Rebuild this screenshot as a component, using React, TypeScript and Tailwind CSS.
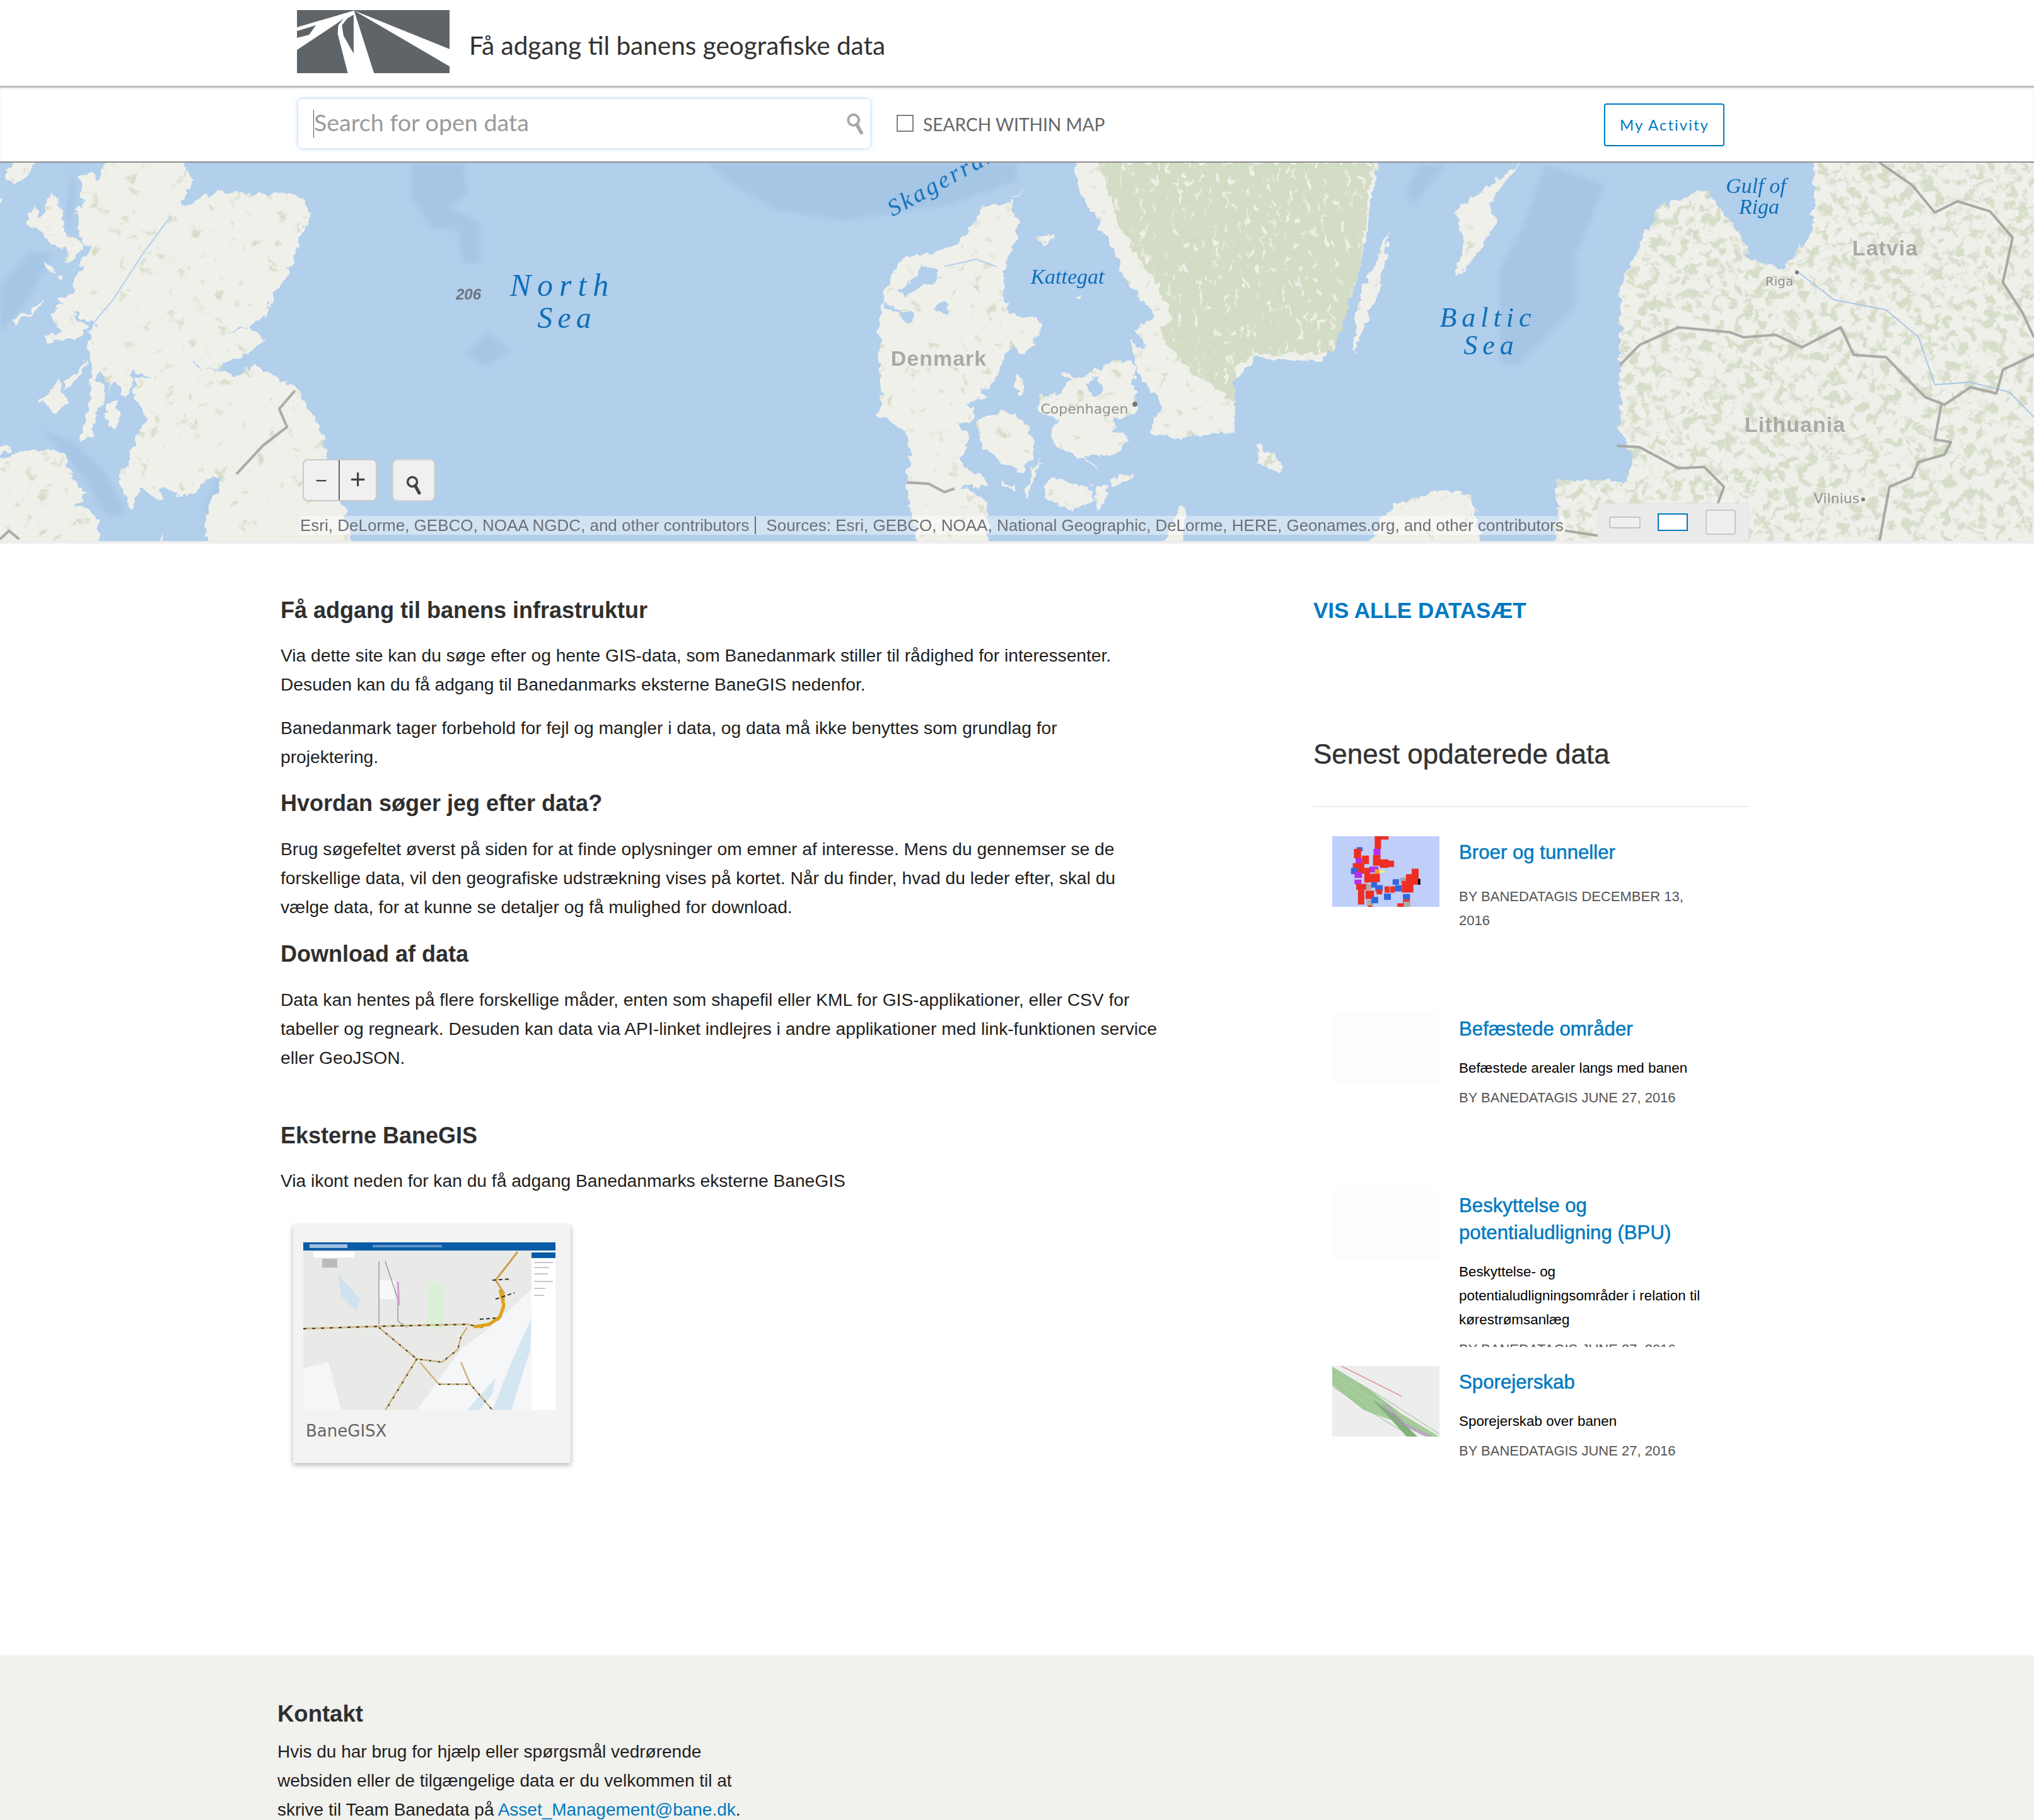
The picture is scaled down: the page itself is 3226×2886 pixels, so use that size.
import React from 'react';

// traced map shapes, each group in the coordinates of its own crop
const WEST = 'scale(0.3571,0.3827)';
const MID = 'translate(1380,0) scale(0.3571,0.3827)';
const EAST = 'translate(1613,-8) scale(1.0287,0.3956)';

const westLand = [
  'M500 -60 L820 -60 L820 30 L870 60 L830 120 L800 190 L760 215 L810 180 L960 120 L1100 130 L1300 125 L1360 160 L1380 230 L1340 290 L1310 380 L1270 480 L1210 550 L1195 620 L1110 675 L1050 690 L1000 715 L1110 675 L1170 740 L1100 790 L1040 810 L970 855 L900 850 L850 815 L880 850 L970 860 L1050 885 L1130 840 L1210 880 L1310 930 L1380 1030 L1430 1120 L1450 1220 L1520 1420 L1600 1700 L960 1700 L905 1490 L960 1360 L990 1300 L920 1310 L860 1370 L790 1380 L720 1340 L720 1410 L620 1350 L590 1430 L520 1320 L550 1280 L590 1180 L650 1060 L620 1010 L590 960 L600 890 L670 890 L590 860 L580 940 L555 975 L510 900 L480 930 L500 960 L450 860 L395 930 L410 850 L390 760 L400 700 L430 670 L380 650 L320 620 L250 570 L340 540 L330 490 L380 430 L350 420 L400 360 L340 280 L340 190 L370 180 L355 60 L400 40 L430 80 Z',
  'M225 125 L270 180 L285 280 L310 310 L380 340 L340 390 L300 420 L290 350 L220 340 L190 290 L110 250 L140 210 L150 170 L180 230 Z',
  'M195 410 L240 420 L240 460 L215 450 Z',
  'M250 465 L275 465 L270 490 Z',
  'M55 650 L130 620 L185 570 L180 600 L120 640 L70 675 Z',
  'M220 620 L280 590 L340 640 L390 680 L370 720 L290 730 L210 745 L200 720 L280 700 L240 660 Z',
  'M385 810 L340 860 L290 910 L290 950 L340 900 L385 830 Z',
  'M175 1000 L260 900 L300 1000 L230 1040 L220 1000 Z',
  'M400 880 L470 940 L460 990 L420 1060 L410 1130 L360 1160 L380 1050 L410 950 Z',
  'M470 1000 L510 990 L540 1070 L500 1100 L470 1060 Z',
  'M-60 1230 L60 1210 L130 1190 L240 1190 L300 1220 L320 1310 L380 1370 L330 1420 L400 1430 L440 1490 L430 1700 L-60 1700 Z',
  'M30 30 L90 -60 L190 -60 L130 50 L60 90 L35 70 Z',
  'M-60 120 L20 160 L-60 220 Z',
  'M-60 1150 L60 1190 L-60 1230 Z',
  'M680 1700 L720 1530 L730 1700 Z',
];

const midLand = [
  'M680 105 L640 140 L630 180 L655 240 L650 320 L620 380 L590 460 L600 560 L620 630 L680 640 L740 640 L760 680 L730 740 L700 780 L660 790 L640 760 L600 790 L580 850 L550 900 L530 930 L490 940 L520 970 L420 1000 L470 1020 L460 1060 L400 1080 L430 1120 L440 1180 L390 1230 L440 1270 L520 1310 L530 1340 L400 1340 L490 1380 L530 1440 L510 1700 L240 1700 L170 1400 L160 1310 L180 1200 L160 1110 L90 1070 L30 1050 L50 1000 L40 800 L45 640 L50 590 L90 480 L150 390 L280 370 L400 340 L450 260 L500 180 L620 170 Z',
  'M745 315 L820 295 L800 330 L760 345 Z',
  'M905 555 L945 550 L920 570 Z',
  'M650 880 L680 910 L670 960 L650 960 Z',
  'M470 1070 L600 1030 L680 1060 L700 1110 L725 1160 L720 1230 L680 1280 L580 1240 L500 1180 Z',
  'M760 1225 L720 1320 L700 1400 L690 1370 L720 1270 Z',
  'M580 1310 L650 1350 L640 1360 L590 1340 Z',
  'M750 975 L850 950 L900 900 L850 870 L950 890 L1100 810 L1180 840 L1170 960 L1190 1000 L1170 1050 L1090 1070 L1080 1110 L1145 1140 L1120 1190 L1050 1220 L960 1220 L1040 1300 L960 1230 L830 1180 L800 1130 L830 1060 L760 1040 Z',
  'M1060 1320 L1170 1280 L1160 1310 L1080 1340 Z',
  'M1000 1340 L1060 1340 L1050 1400 L1010 1450 Z',
  'M770 1340 L820 1300 L900 1330 L970 1340 L1000 1400 L890 1445 L780 1390 Z',
  'M1230 1700 L1380 1420 L1400 1440 L1380 1700 Z',
  'M910 -60 L1620 -60 L1620 1110 L1400 1140 L1290 1130 L1240 1125 L1265 1060 L1295 1000 L1260 950 L1200 900 L1160 770 L1145 740 L1230 770 L1180 690 L1265 640 L1250 600 L1200 570 L1120 460 L1080 360 L1020 270 L1000 200 L960 180 L920 100 Z',
];

const midInlets = [
  'M60 570 L130 620 L190 620 L190 660 L160 660 L130 630 L60 610 Z',
  'M230 430 L310 440 L290 500 L230 510 L150 560 L130 530 L190 480 Z',
  'M280 600 L340 570 L350 630 L290 620 Z',
  'M950 920 L1010 890 L1040 950 L990 970 Z',
];

const eastLand = [
  'M300 -60 L560 -60 L545 200 L530 430 L510 600 L490 700 L470 820 L370 800 L330 900 L335 1100 L300 1110 Z',
  'M575 290 L560 520 L520 780 L520 620 L545 460 Z',
  'M775 25 L700 160 L675 220 L690 340 L675 480 L695 440 L740 260 L730 180 Z',
  'M375 1150 L410 1230 L400 1270 L370 1210 Z',
  'M500 1700 L580 1390 L660 1330 L700 1350 L730 1700 Z',
  'M1230 -60 L1225 300 L1180 450 L1130 400 L1110 290 L1060 130 L990 200 L950 400 L930 520 L930 1100 L950 1200 L940 1300 L830 1290 L835 1400 L820 1700 L1620 1700 L1620 -60 Z',
];

const borders = {
  west: ['M1310 945 L1240 1020 L1275 1095 L1170 1170 L1050 1290', 'M0 1560 L40 1525 L85 1560'],
  mid: ['M165 1325 L260 1330 L330 1365 L375 1350'],
  east: [
    'M1330 20 L1380 110 L1415 220 L1450 175 L1500 215 L1535 320 L1520 500 L1550 620 L1568 720',
    'M930 830 L960 750 L1020 680 L1100 700 L1120 720 L1170 710 L1210 760 L1270 680 L1290 790 L1340 800 L1400 960 L1430 990 L1470 920 L1510 945 L1520 850 L1568 790',
    'M1425 990 L1415 1130 L1440 1140 L1430 1190 L1390 1220 L1380 1280 L1345 1320 L1330 1535',
    'M925 1155 L960 1160 L1020 1245 L1060 1240 L1090 1320 L1080 1390',
    'M845 1495 L895 1515',
  ],
};

const squares: [number, number, number, number, string][] = [
  [262, 198, 22, 60, '#ee2e24'], [270, 198, 40, 16, '#ee2e24'], [200, 250, 20, 20, '#3366dd'], [190, 258, 25, 45, '#ee2e24'],
  [258, 258, 24, 30, '#b52ee8'], [256, 288, 26, 50, '#ee2e24'], [196, 302, 22, 26, '#b52ee8'], [218, 290, 24, 40, '#ee2e24'],
  [186, 326, 40, 50, '#ee2e24'], [180, 348, 24, 30, '#3366dd'], [280, 308, 30, 40, '#ee2e24'], [305, 314, 24, 30, '#ee2e24'],
  [244, 342, 30, 28, '#b52ee8'], [192, 366, 26, 30, '#b52ee8'], [226, 348, 20, 70, '#ee2e24'], [262, 354, 16, 26, '#f0a030'],
  [278, 360, 18, 12, '#f5ee80'], [240, 376, 40, 40, '#ee2e24'], [192, 404, 24, 22, '#b52ee8'], [198, 424, 40, 28, '#ee2e24'],
  [232, 426, 20, 26, '#aaaaaa'], [250, 416, 20, 26, '#3366dd'], [264, 430, 26, 30, '#3366dd'], [268, 450, 20, 24, '#ee2e24'],
  [204, 452, 22, 70, '#ee2e24'], [230, 456, 30, 40, '#ee2e24'], [296, 436, 18, 30, '#ee2e24'], [294, 470, 24, 30, '#3366dd'],
  [316, 436, 16, 30, '#ee2e24'], [332, 430, 24, 30, '#3366dd'], [324, 402, 22, 26, '#3366dd'], [350, 394, 20, 30, '#aaaaaa'],
  [370, 378, 44, 50, '#ee2e24'], [390, 352, 24, 40, '#ee2e24'], [356, 410, 40, 55, '#ee2e24'], [412, 400, 8, 28, '#000000'],
  [360, 472, 24, 26, '#3366dd'], [360, 498, 24, 35, '#ee2e24'], [362, 508, 22, 25, '#aaaaaa'], [340, 516, 22, 17, '#ee2e24'],
  [234, 500, 24, 26, '#aaaaaa'], [250, 486, 24, 30, '#3366dd'], [238, 526, 16, 7, '#ee2e24'],
];

const updates = [
  { title: 'Broer og tunneller', desc: '', meta: 'BY BANEDATAGIS DECEMBER 13, 2016', thumb: 'broer' },
  { title: 'Befæstede områder', desc: 'Befæstede arealer langs med banen', meta: 'BY BANEDATAGIS JUNE 27, 2016', thumb: 'blank' },
  {
    title: 'Beskyttelse og potentialudligning (BPU)',
    desc: 'Beskyttelse- og potentialudligningsområder i relation til kørestrømsanlæg',
    meta: 'BY BANEDATAGIS JUNE 27, 2016',
    thumb: 'blank',
  },
  { title: 'Sporejerskab', desc: 'Sporejerskab over banen', meta: 'BY BANEDATAGIS JUNE 27, 2016', thumb: 'spor' },
];

function Logo() {
  return (
    <svg className="block w-[242px] h-[100px]" viewBox="0 0 727 300" preserveAspectRatio="none">
      <rect width="727" height="300" fill="#5f6469" />
      <path d="M272 2 L727 185 L727 268 Z" fill="#fff" />
      <path d="M272 2 L0 82 L0 100 L90 72 L58 118 L0 132 L0 190 L195 60 Z" fill="#fff" />
      <path d="M272 2 L367 300 L242 300 L194 112 L197 72 L232 27 Z" fill="#fff" />
      <path d="M270 207 L222 122 L214 72 L240 40 L270 22 Z" fill="#5f6469" />
    </svg>
  );
}

function Magnifier({ className, color }: { className: string; color: string }) {
  return (
    <svg className={className} viewBox="0 0 24 30" fill="none" stroke={color}>
      <circle cx="10" cy="10" r="7.5" strokeWidth="3.5" />
      <path d="M14.5 16 L21 28" strokeWidth="5" strokeLinecap="round" />
    </svg>
  );
}

function BaseMap() {
  return (
    <svg className="absolute inset-0 w-full h-full" viewBox="0 0 3226 600" preserveAspectRatio="none">
      <defs>
        <filter id="soft" filterUnits="userSpaceOnUse" x="-40" y="-40" width="3306" height="680">
          <feGaussianBlur stdDeviation="3" />
        </filter>
        <filter id="rough" filterUnits="userSpaceOnUse" x="-40" y="-40" width="3306" height="680">
          <feTurbulence type="fractalNoise" baseFrequency="0.07" numOctaves="3" seed="11" result="n" />
          <feDisplacementMap in="SourceGraphic" in2="n" scale="16" xChannelSelector="R" yChannelSelector="G" result="d" />
          <feGaussianBlur in="d" stdDeviation="0.6" />
        </filter>
        <filter id="patches" colorInterpolationFilters="sRGB" filterUnits="userSpaceOnUse" x="0" y="0" width="3226" height="600">
          <feTurbulence type="fractalNoise" baseFrequency="0.05" numOctaves="3" seed="7" />
          <feColorMatrix type="matrix" values="0 0 0 0 0.84  0 0 0 0 0.87  0 0 0 0 0.79  8 0 0 0 -5.2" />
        </filter>
        <filter id="patchesDense" colorInterpolationFilters="sRGB" filterUnits="userSpaceOnUse" x="0" y="0" width="3226" height="600">
          <feTurbulence type="fractalNoise" baseFrequency="0.06" numOctaves="3" seed="21" />
          <feColorMatrix type="matrix" values="0 0 0 0 0.84  0 0 0 0 0.87  0 0 0 0 0.79  8 0 0 0 -4.1" />
        </filter>
        <filter id="flecks" colorInterpolationFilters="sRGB" filterUnits="userSpaceOnUse" x="0" y="0" width="3226" height="600">
          <feTurbulence type="fractalNoise" baseFrequency="0.12 0.05" numOctaves="3" seed="3" />
          <feColorMatrix type="matrix" values="0 0 0 0 0.94  0 0 0 0 0.94  0 0 0 0 0.91  10 0 0 0 -6.3" />
        </filter>
        <clipPath id="land">
          {westLand.map(d => <path key={d} d={d} transform={WEST} />)}
          {midLand.map(d => <path key={d} d={d} transform={MID} />)}
          {eastLand.map(d => <path key={d} d={d} transform={EAST} />)}
        </clipPath>
        <clipPath id="baltics">
          <path transform={EAST} d="M1230 -60 L1225 300 L1180 450 L1130 400 L1110 290 L1060 130 L990 200 L950 400 L930 520 L930 1100 L950 1200 L940 1300 L830 1290 L835 1400 L820 1700 L1620 1700 L1620 -60 Z" />
        </clipPath>
        <clipPath id="sweden">
          <path transform={MID} d="M990 -60 L1620 -60 L1620 1000 L1480 900 L1350 800 L1290 690 L1340 640 L1260 480 L1180 380 L1100 250 Z" />
          <path transform={EAST} d="M300 -60 L550 -60 L530 430 L490 780 L370 790 L300 870 Z" />
        </clipPath>
      </defs>

      <rect width="3226" height="600" fill="#b2cfec" />

      {/* darker sea floor */}
      <g filter="url(#soft)">
        <g fill="#a6c6e5">
          <path transform={WEST} d="M190 1110 L330 1160 L470 1290 L560 1450 L480 1470 L370 1300 L250 1170 Z" />
          <path transform={WEST} d="M0 520 L130 370 L230 380 L130 560 L0 700 Z" />
          <path transform={WEST} d="M320 30 L330 120 L310 280 L295 200 Z" />
          <path transform={WEST} d="M960 1310 L980 1330 L920 1450 L900 1470 Z" />
        </g>
        <g fill="#a6c6e5" transform="translate(0,-8) scale(1.0287,0.3956)">
          <path d="M635 20 L715 20 L720 150 L690 200 L740 260 L740 420 L715 420 L705 290 L665 280 L650 220 L635 170 Z" />
          <path d="M750 700 L785 770 L750 835 L720 790 Z" />
          <path d="M1090 20 L1568 20 L1568 90 L1460 190 L1300 250 L1200 210 L1130 110 Z" />
        </g>
        <g fill="#a6c6e5" transform={EAST}>
          <path d="M815 30 L905 110 L860 400 L860 600 L770 835 L745 820 L745 450 L780 280 Z" />
          <path d="M620 30 L660 30 L610 190 L600 140 Z" />
        </g>
      </g>

      <g filter="url(#rough)">
        <g fill="#f0f0eb">
          {westLand.map(d => <path key={d} d={d} transform={WEST} />)}
          {midLand.map(d => <path key={d} d={d} transform={MID} />)}
          {eastLand.map(d => <path key={d} d={d} transform={EAST} />)}
        </g>
        <g clipPath="url(#land)">
          <rect width="3226" height="600" filter="url(#patches)" />
        </g>
        <g clipPath="url(#baltics)">
          <rect width="3226" height="600" filter="url(#patchesDense)" />
        </g>
        <g clipPath="url(#sweden)">
          <rect width="3226" height="600" fill="#d3dcc4" />
          <rect width="3226" height="600" filter="url(#flecks)" />
        </g>
        <g fill="#b2cfec">
          {midInlets.map(d => <path key={d} d={d} transform={MID} />)}
        </g>
      </g>

      {/* great glen and river */}
      <path transform={WEST} d="M760 220 L640 370 L500 570 L400 680" fill="none" stroke="#b2cfec" strokeWidth="2" vectorEffect="non-scaling-stroke" />
      <path transform={MID} d="M330 430 L470 400 L560 430" fill="none" stroke="#b2cfec" strokeWidth="2" vectorEffect="non-scaling-stroke" />
      <path
        transform={EAST}
        d="M1200 450 L1260 570 L1340 610 L1390 720 L1415 910 L1470 900 L1530 940 L1568 1040"
        fill="none"
        stroke="#a8c8e6"
        strokeWidth="2"
        vectorEffect="non-scaling-stroke"
      />

      <g fill="none" stroke="#a8a8a4" strokeWidth="4" strokeLinejoin="round">
        {borders.west.map(d => <path key={d} d={d} transform={WEST} vectorEffect="non-scaling-stroke" />)}
        {borders.mid.map(d => <path key={d} d={d} transform={MID} vectorEffect="non-scaling-stroke" />)}
        {borders.east.map(d => <path key={d} d={d} transform={EAST} vectorEffect="non-scaling-stroke" />)}
      </g>
      <circle cx="1800" cy="383" r="4" fill="#777" />
      <circle cx="2850" cy="174" r="3" fill="#777" />
      <circle cx="2955" cy="534" r="3" fill="#777" />

      <g className="font-['Liberation_Serif',serif] italic" fill="#0f6fb8" textAnchor="middle">
        <text x="892" y="211" fontSize="50" letterSpacing="10">North</text>
        <text x="899" y="262" fontSize="48" letterSpacing="8">Sea</text>
        <text x="0" y="0" fontSize="38" letterSpacing="4" textAnchor="start" transform="translate(1416 86) rotate(-29)">Skagerrak</text>
        <text x="1693" y="192" fontSize="34">Kattegat</text>
        <text x="2360" y="260" fontSize="44" letterSpacing="8">Baltic</text>
        <text x="2365" y="304" fontSize="44" letterSpacing="8">Sea</text>
        <text x="2785" y="48" fontSize="34">Gulf of</text>
        <text x="2790" y="81" fontSize="34">Riga</text>
      </g>
      <g className="font-['Liberation_Sans',sans-serif]" fill="#a9a9a6" textAnchor="middle">
        <text x="743" y="217" fontSize="24" fontWeight="700" fontStyle="italic" fill="#6c7480">206</text>
        <text x="1489" y="322" fontSize="34" fontWeight="700" letterSpacing="1">Denmark</text>
        <text x="2990" y="147" fontSize="34" fontWeight="700" letterSpacing="1">Latvia</text>
        <text x="2847" y="427" fontSize="34" fontWeight="700" letterSpacing="1">Lithuania</text>
      </g>
      <g className="font-['DejaVu_Sans',sans-serif]" fill="#8f8f8c" textAnchor="middle">
        <text x="1720" y="398" fontSize="22">Copenhagen</text>
        <text x="2822" y="195" fontSize="20">Riga</text>
        <text x="2913" y="540" fontSize="22">Vilnius</text>
      </g>
    </svg>
  );
}

function BroerThumb() {
  return (
    <svg className="block w-full h-full" viewBox="115 198 371 335" preserveAspectRatio="none">
      <rect x="115" y="198" width="371" height="335" fill="#bfcffa" />
      {squares.map(([x, y, w, h, c], i) => <rect key={i} x={x} y={y} width={w} height={h} fill={c} />)}
    </svg>
  );
}

function SporThumb() {
  return (
    <svg className="block w-full h-full" viewBox="0 0 170 112">
      <rect width="170" height="112" fill="#ededed" />
      <path d="M0 2 L60 38 L110 76 L170 112 L150 112 L105 90 L50 70 L0 30 Z" fill="#a6cb9b" />
      <path d="M62 52 L100 78 L135 112 L118 112 L85 76 Z" fill="#7fb276" />
      <path d="M0 8 L70 50 M0 16 L60 56 M0 24 L50 62 M30 20 L100 70" fill="none" stroke="#8dba82" strokeWidth="1" strokeDasharray="3 1" />
      <path d="M0 32 L60 72 L125 112 M0 2 L80 50 L170 108" fill="none" stroke="#8dba82" strokeWidth="1" />
      <path d="M80 60 L105 90 L150 112 M86 62 L115 92 L158 112" fill="none" stroke="#c77fe0" strokeWidth="1.2" />
      <path d="M14 0 L110 48" fill="none" stroke="#ea6f74" strokeWidth="1.2" />
    </svg>
  );
}

function BaneGisThumb() {
  return (
    <svg className="block w-full h-full blur-[0.6px]" viewBox="0 0 400 266">
      <rect width="400" height="266" fill="#e9eae8" />
      <path d="M180 266 L250 170 L290 140 L400 40 L400 266 Z" fill="#f5f6f8" />
      <path d="M0 200 L40 190 L60 266 L0 266 Z" fill="#f5f6f8" />
      <path d="M55 50 L90 90 L85 110 L60 85 Z" fill="#cfe2ee" />
      <path d="M200 60 L225 70 L220 140 L195 130 Z" fill="#dcf0d8" />
      <path d="M120 60 L145 60 L145 90 L120 90 Z" fill="#f8f8f8" />
      <path d="M260 266 L305 215 L300 240 L280 266 M330 266 L360 170 L362 120 L330 190 L300 266 Z" fill="#d4e6f2" />
      <path d="M0 137 L125 133 L260 130 L285 135" fill="none" stroke="#d8bf83" strokeWidth="3" />
      <path d="M0 137 L125 133 L260 130 L285 135" fill="none" stroke="#333" strokeWidth="2" strokeDasharray="5 9" />
      <path d="M120 135 L180 185 L220 190 L245 170 L250 150 L260 135 M180 185 L130 266 M185 190 L215 225 L265 225 L300 266 M250 190 L265 225" fill="none" stroke="#cdb27a" strokeWidth="2.5" />
      <path d="M120 135 L180 185 L220 190 L245 170 L250 150 M180 185 L135 260 M215 225 L265 225 L300 266" fill="none" stroke="#333" strokeWidth="2" strokeDasharray="3 11" />
      <path d="M130 30 L150 90 L150 125 L165 135 M120 30 L120 130" fill="none" stroke="#9e9896" strokeWidth="1.5" />
      <path d="M150 62 L152 100" fill="none" stroke="#d59fd2" strokeWidth="3" />
      <path d="M280 135 L310 122 L318 105 L318 80 L305 60 L340 15" fill="none" stroke="#c9a24a" strokeWidth="3" />
      <path d="M270 134 L295 130 L312 118 L318 100 L312 75" fill="none" stroke="#e2a016" strokeWidth="5" />
      <path d="M280 122 L305 120 M300 60 L330 58 M305 90 L335 80" fill="none" stroke="#333" strokeWidth="2" strokeDasharray="6 4" />
      <rect width="400" height="13" fill="#0b5ca6" />
      <rect x="10" y="3" width="60" height="6" fill="#9dbfe0" />
      <rect x="110" y="4" width="110" height="4" fill="#5c93c8" />
      <rect x="362" y="13" width="38" height="253" fill="#fff" />
      <rect x="362" y="16" width="38" height="9" fill="#0b5ca6" />
      <path d="M366 32 H396 M366 40 H390 M366 50 H388 M366 62 H396 M366 73 H384 M366 84 H382" stroke="#c8c8c8" strokeWidth="2" />
      <rect x="16" y="15" width="65" height="9" fill="#fff" />
      <rect x="30" y="26" width="24" height="14" fill="#b9bcbd" />
    </svg>
  );
}

export default function App() {
  return (
    <div className="h-[2886px] overflow-hidden bg-white font-['Liberation_Sans',sans-serif] text-[#1e1e1e]">
      {/* Header */}
      <header className="h-[136px] flex items-start pl-[471px] pt-4">
        <Logo />
        <h1 className="ml-[31px] mt-[32px] font-['Lato',sans-serif] text-[40.5px] leading-[48px] text-[#323232]">
          Få adgang til banens geografiske data
        </h1>
      </header>

      {/* Search bar */}
      <div className="h-[120px] border-t-[3px] border-[#bdbdbd] shadow-[inset_0_2px_3px_rgba(0,0,0,0.08)] flex items-start pl-[473px]">
        <div className="mt-[18px] w-[907px] h-[78px] rounded-md bg-white shadow-[0_0_7px_rgba(90,160,230,0.55)] flex items-center pl-6 pr-[10px]">
          <span className="w-px h-[44px] bg-[#555]" />
          <span className="flex-1 -mt-[3px] font-['Lato',sans-serif] text-[37.6px] text-[#9a9a9a]">Search for open data</span>
          <Magnifier className="w-[28px] h-[34px]" color="#a8a8a8" />
        </div>
        <span className="ml-[42px] mt-[43px] w-[27px] h-[27px] border-2 border-[#808080]" />
        <span className="ml-[15px] mt-[41px] font-['Lato',sans-serif] text-[28.1px] leading-[34px] text-[#666]">SEARCH WITHIN MAP</span>
        <button className="ml-[792px] mt-[25px] w-[191px] h-[68px] rounded border-2 border-[#0079c1] bg-white font-['Lato',sans-serif] text-[24px] tracking-[2px] text-[#0079c1]">
          My Activity
        </button>
      </div>

      {/* Map */}
      <div className="relative h-[600px] overflow-hidden border-t-[2px] border-[#8c8c8c] box-content">
        <BaseMap />
        <div className="absolute left-[480px] top-[470px] flex">
          <div className="flex w-[118px] h-[67px] rounded-lg border-2 border-[#c9c9c9] bg-[#f0f0f0] text-[#444] overflow-hidden">
            <span className="w-[57px] flex items-center justify-center text-[32px] border-r-2 border-[#666]">−</span>
            <span className="flex-1 flex items-center justify-center text-[44px] leading-none pb-1">+</span>
          </div>
          <div className="ml-[24px] w-[68px] h-[67px] rounded-lg border-2 border-[#d4d4d4] bg-[#f0f0f0] flex items-center justify-center pt-[14px]">
            <Magnifier className="w-[24px] h-[30px]" color="#444" />
          </div>
        </div>
        <div className="absolute left-[476px] top-[560px] h-[30px] w-[2005px] bg-white/40 flex items-center whitespace-nowrap text-[26px] leading-[30px] text-[#6c7075]">
          <span>Esri, DeLorme, GEBCO, NOAA NGDC, and other contributors</span>
          <span className="ml-[9px] mr-[16px] w-[2px] h-[28px] bg-[#6c7075]" />
          <span>Sources: Esri, GEBCO, NOAA, National Geographic, DeLorme, HERE, Geonames.org, and other contributors</span>
        </div>
        <div className="absolute left-[2534px] top-[540px] w-[240px] h-[60px] bg-[#ebebeb] border border-[#e2e2e2] flex items-center pl-[17px]">
          <span className="w-[50px] h-[19px] rounded bg-[#efefef] border-2 border-[#c4c4c4]" />
          <span className="ml-[27px] w-[48px] h-[28px] bg-white border-2 border-[#0079c1]" />
          <span className="ml-[28px] w-[48px] h-[40px] rounded bg-[#efefef] border-2 border-[#c8c8c8]" />
        </div>
      </div>
      <div className="h-1 bg-[#eeeeee]" />

      {/* Content */}
      <main className="h-[1763px] flex pl-[445px]">
        <section className="w-[1638px] pt-[84px]">
          <div className="w-[1392px] text-[28.2px] leading-[46px]">
            <h2 className="text-[36px] leading-[44px] font-bold text-[#2f2f2f]">Få adgang til banens infrastruktur</h2>
            <p className="mt-[26px]">
              Via dette site kan du søge efter og hente GIS-data, som Banedanmark stiller til rådighed for interessenter. Desuden kan du få adgang til Banedanmarks eksterne BaneGIS nedenfor.
            </p>
            <p className="mt-[23px]">
              Banedanmark tager forbehold for fejl og mangler i data, og data må ikke benyttes som grundlag for projektering.
            </p>
            <h2 className="mt-[29px] text-[36px] leading-[44px] font-bold text-[#2f2f2f]">Hvordan søger jeg efter data?</h2>
            <p className="mt-[27px]">
              Brug søgefeltet øverst på siden for at finde oplysninger om emner af interesse. Mens du gennemser se de forskellige data, vil den geografiske udstrækning vises på kortet. Når du finder, hvad du leder efter, skal du vælge data, for at kunne se detaljer og få mulighed for download.
            </p>
            <h2 className="mt-[30px] text-[36px] leading-[44px] font-bold text-[#2f2f2f]">Download af data</h2>
            <p className="mt-[27px]">
              Data kan hentes på flere forskellige måder, enten som shapefil eller KML for GIS-applikationer, eller CSV for tabeller og regneark. Desuden kan data via API-linket indlejres i andre applikationer med link-funktionen service eller GeoJSON.
            </p>
            <h2 className="mt-[79px] text-[36px] leading-[44px] font-bold text-[#2f2f2f]">Eksterne BaneGIS</h2>
            <p className="mt-[26px]">Via ikont neden for kan du få adgang Banedanmarks eksterne BaneGIS</p>
          </div>
          <div className="ml-[20px] mt-[47px] w-[440px] h-[378px] bg-[#f3f3f3] shadow-[0_3px_8px_rgba(0,0,0,0.3)] px-4 pt-7">
            <div className="w-[400px] h-[266px]">
              <BaneGisThumb />
            </div>
            <p className="mt-[16px] ml-1 font-['DejaVu_Sans',sans-serif] text-[26px] leading-[34px] text-[#666]">BaneGISX</p>
          </div>
        </section>

        <aside className="w-[692px] pt-[84px]">
          <a className="block text-[35px] leading-[44px] font-bold text-[#0079c1]">VIS ALLE DATASÆT</a>
          <h2 className="mt-[180px] text-[44px] leading-[52px] text-[#323232] [-webkit-text-stroke:0.4px_#323232]">Senest opdaterede data</h2>
          <div className="mt-[56px] border-t-2 border-[#eeeeee] pt-[46px] pl-[30px]">
            {updates.map(item => (
              <article key={item.title} className="flex h-[250px] overflow-hidden mb-[30px]">
                <div className="w-[170px] h-[112px] shrink-0 bg-[#fdfdfd]">
                  {item.thumb === 'broer' && <BroerThumb />}
                  {item.thumb === 'spor' && <SporThumb />}
                </div>
                <div className="ml-[31px] w-[400px] pt-1">
                  <h3 className="text-[31.2px] leading-[43px] text-[#0079c1] [-webkit-text-stroke:0.5px_#0079c1]">{item.title}</h3>
                  <p className={`min-h-px text-[22.4px] leading-[38px] text-black ${item.desc ? 'mt-[22px]' : 'mt-5'}`}>{item.desc}</p>
                  <p className="mt-[9px] text-[22px] leading-[38px] text-[#555]">{item.meta}</p>
                </div>
              </article>
            ))}
          </div>
        </aside>
      </main>

      {/* Footer */}
      <footer className="h-[261px] bg-[#f1f1ee] pl-[440px] pt-[71px]">
        <h2 className="text-[36.5px] leading-[44px] font-bold text-[#2f2f2f]">Kontakt</h2>
        <p className="mt-[15px] w-[760px] text-[28px] leading-[46px]">
          Hvis du har brug for hjælp eller spørgsmål vedrørende websiden eller de tilgængelige data er du velkommen til at skrive til Team Banedata på <a className="text-[#0079c1]">Asset_Management@bane.dk</a>.
        </p>
      </footer>
    </div>
  );
}
